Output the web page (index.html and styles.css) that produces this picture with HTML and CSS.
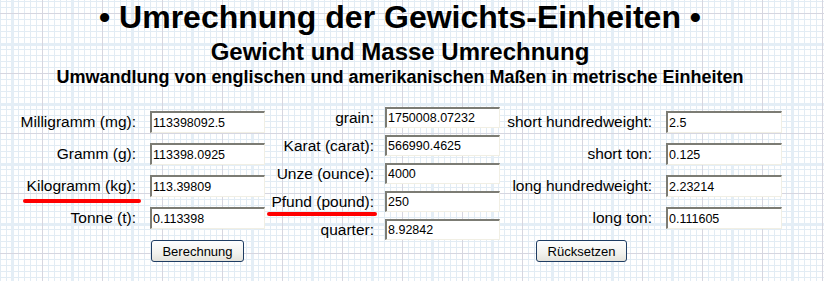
FILE: index.html
```html
<!DOCTYPE html>
<html lang="de">
<head>
    <meta charset="UTF-8">
    <meta name="viewport" content="width=device-width, initial-scale=1.0">
    <title>Umrechnung der Gewichts-Einheiten</title>
    <link rel="stylesheet" href="styles.css">
</head>
<body>

<div class="page">
    <h1>&bull; Umrechnung der Gewichts-Einheiten &bull;</h1>
    <h2>Gewicht und Masse Umrechnung</h2>
    <h3>Umwandlung von englischen und amerikanischen Maßen in metrische Einheiten</h3>

    <form class="converter" onsubmit="return false;">
        <!-- metrische Einheiten -->
        <div class="col col-metric">
            <div class="row">
                <label class="lbl">Milligramm (mg):</label>
                <input type="text" value="113398092.5">
            </div>
            <div class="row">
                <label class="lbl">Gramm (g):</label>
                <input type="text" value="113398.0925">
            </div>
            <div class="row">
                <label class="lbl"><span class="mark mark-kg">Kilogramm (kg):</span></label>
                <input type="text" value="113.39809">
            </div>
            <div class="row">
                <label class="lbl">Tonne (t):</label>
                <input type="text" value="0.113398">
            </div>
            <button type="button" class="btn btn-calc">Berechnung</button>
        </div>

        <!-- englische Einheiten -->
        <div class="col col-imperial">
            <div class="row">
                <label class="lbl">grain:</label>
                <input type="text" value="1750008.07232">
            </div>
            <div class="row">
                <label class="lbl">Karat (carat):</label>
                <input type="text" value="566990.4625">
            </div>
            <div class="row">
                <label class="lbl">Unze (ounce):</label>
                <input type="text" value="4000">
            </div>
            <div class="row">
                <label class="lbl"><span class="mark mark-lb">Pfund (pound):</span></label>
                <input type="text" value="250">
            </div>
            <div class="row">
                <label class="lbl">quarter:</label>
                <input type="text" value="8.92842">
            </div>
        </div>

        <!-- amerikanische Einheiten -->
        <div class="col col-us">
            <div class="row">
                <label class="lbl">short hundredweight:</label>
                <input type="text" value="2.5">
            </div>
            <div class="row">
                <label class="lbl">short ton:</label>
                <input type="text" value="0.125">
            </div>
            <div class="row">
                <label class="lbl">long hundredweight:</label>
                <input type="text" value="2.23214">
            </div>
            <div class="row">
                <label class="lbl">long ton:</label>
                <input type="text" value="0.111605">
            </div>
            <button type="reset" class="btn btn-reset">Rücksetzen</button>
        </div>
    </form>
</div>

</body>
</html>
```

FILE: styles.css
```css
body {
    margin: 0;
    font-family: 'Liberation Sans', Arial, sans-serif;
    color: #000;
    background-color: #fff;
    background-image:
        linear-gradient(to right, #d6d6e0 1px, transparent 1px),
        linear-gradient(to bottom, #d6d6e0 1px, transparent 1px),
        linear-gradient(to right, #e4eef6 3px, transparent 3px),
        linear-gradient(to bottom, #e4eef6 3px, transparent 3px),
        linear-gradient(to right, #e2ecf4 1px, transparent 1px),
        linear-gradient(to bottom, #e2ecf4 1px, transparent 1px);
    background-size: 60px 60px, 60px 60px, 60px 60px, 60px 60px, 6px 6px, 6px 6px;
    background-position: 42px 0, 0 13px, 11px 0, 0 43px, 0 0, 0 1px;
}

.page {
    width: 800px;
}

h1, h2, h3 {
    margin: 0;
    text-align: center;
    font-weight: bold;
}

h1 {
    font-size: 32px;
    line-height: 34px;
}

h2 {
    font-size: 24px;
    line-height: 28px;
    margin-top: 4px;
}

h3 {
    font-size: 18px;
    line-height: 22px;
}

.converter {
    display: flex;
    align-items: flex-start;
}

.col {
    display: flex;
    flex-direction: column;
    gap: 10px;
    padding-top: 23px;
}

.row {
    display: flex;
    align-items: center;
    height: 22px;
}

.lbl {
    font-size: 15.5px;
    text-align: right;
    white-space: nowrap;
}

.row input {
    box-sizing: border-box;
    width: 115px;
    height: 22px;
    padding: 0 1px;
    margin: 0;
    font-family: 'Liberation Sans', Arial, sans-serif;
    font-size: 12.5px;
    color: #000;
    background: #fff;
    border-top: 2px solid #7c7c74;
    border-left: 2px solid #7c7c74;
    border-right: 1px solid #f1efe4;
    border-bottom: 1px solid #f1efe4;
    outline: none;
}

.col-metric .lbl {
    width: 136px;
    margin-right: 14px;
}

.col-imperial {
    gap: 7px;
    padding-top: 19px;
}

.col-imperial .row {
    height: 21px;
}

.col-imperial .row input {
    height: 21px;
}

.col-imperial .lbl {
    width: 109px;
    margin-right: 11px;
}

.col-us .lbl {
    width: 152px;
    margin-right: 14px;
}

.col-us .row input {
    width: 116px;
}

.mark {
    position: relative;
    display: inline-block;
}

.mark::after {
    content: "";
    position: absolute;
    left: -4px;
    right: -5px;
    height: 4px;
    border-radius: 2px;
    background-color: #f00;
}

.mark-kg::after {
    top: 22px;
}

.mark-lb::after {
    top: 19px;
    right: -3px;
}

.btn {
    align-self: flex-start;
    height: 22px;
    margin-top: 1px;
    padding: 0 10px;
    font-family: 'Liberation Sans', Arial, sans-serif;
    font-size: 13px;
    color: #000;
    background: linear-gradient(#fefefe, #f2f2ee 60%, #e4e3dc);
    border: 1px solid #1f3d63;
    border-radius: 3px;
    cursor: pointer;
}

.btn-calc {
    margin-left: 151px;
    width: 93px;
}

.btn-reset {
    margin-left: 36px;
    width: 91px;
}
```
